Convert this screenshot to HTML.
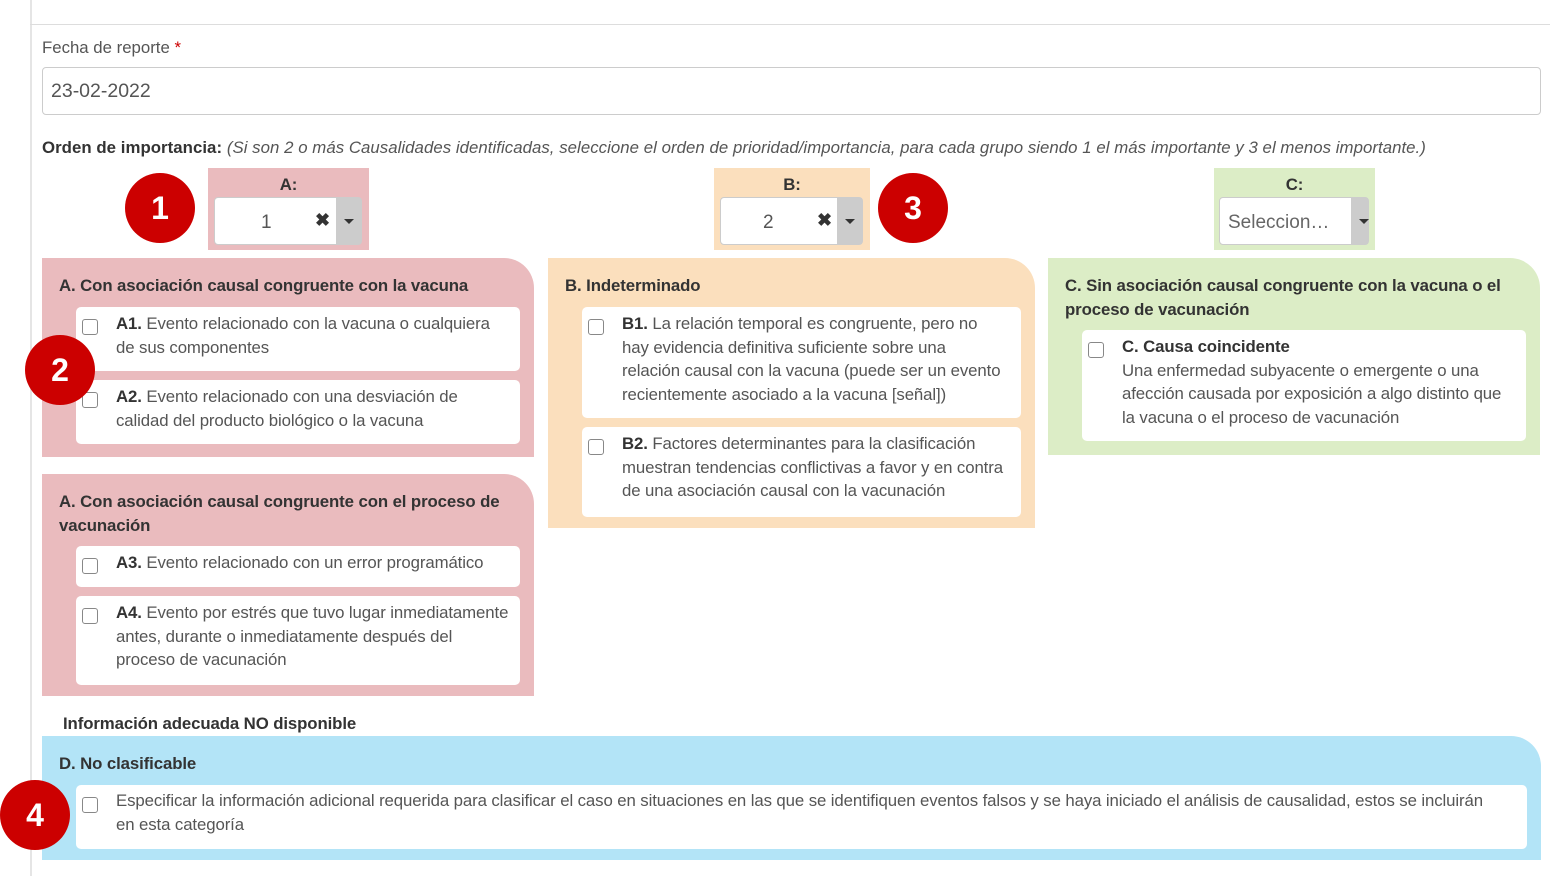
<!DOCTYPE html><html><head><meta charset="utf-8"><style>
*{box-sizing:border-box;margin:0;padding:0}
body{width:1550px;height:880px;position:relative;background:#fff;font-family:"Liberation Sans",sans-serif;color:#555;font-size:16.8px;overflow:hidden}
.a{position:absolute}
.t{font-weight:bold;color:#333;font-size:16.8px;line-height:24px;letter-spacing:-0.1px}
.card{position:absolute;background:#fff;border-radius:5px;line-height:23.5px;font-size:16.8px;padding:5px 14px 0 40px;letter-spacing:-0.1px}
.card b{color:#333}
.cb{position:absolute;left:6px;top:12px;width:16px;height:16px;border:1px solid #888;border-radius:3px;background:#fff}
.circ{position:absolute;width:70px;height:70px;border-radius:50%;background:#c00;color:#fff;font-weight:bold;font-size:32px;text-align:center;line-height:70px}
.sel{position:absolute;background:#fff;border:1px solid #ccc;border-radius:4px;height:48px}
.arr{position:absolute;right:0;top:0;width:25px;height:46px;background:#ccc}
.arr:after{content:"";position:absolute;left:8px;top:21px;border:5px solid transparent;border-top:5px solid #333;border-bottom:0}
</style></head><body>
<div class="a" style="left:30px;top:0;width:2px;height:876px;background:#e5e5e5"></div>
<div class="a" style="left:30px;top:24px;width:1520px;height:1px;background:#ddd"></div>
<div class="a" style="left:42px;top:38px;color:#555">Fecha de reporte <span style="color:#c00">*</span></div>
<div class="a" style="left:42px;top:67px;width:1499px;height:48px;border:1px solid #ccc;border-radius:4px;padding:12px 8px;font-size:19.5px;color:#555;line-height:22px">23-02-2022</div>
<div class="a" style="left:42px;top:138px;color:#555;white-space:nowrap;letter-spacing:0.05px"><b style="color:#333">Orden de importancia:</b> <i>(Si son 2 o más Causalidades identificadas, seleccione el orden de prioridad/importancia, para cada grupo siendo 1 el más importante y 3 el menos importante.)</i></div>

<div class="a" style="left:208px;top:168px;width:161px;height:82px;background:#eabbbe"></div>
<div class="a t" style="left:208px;top:173px;width:161px;text-align:center">A:</div>
<div class="sel" style="left:214px;top:197px;width:148px"><span class="a" style="left:46px;top:14px;font-size:19px">1</span><span class="a" style="left:100px;top:12px;font-size:18px;font-weight:bold;color:#333">✖</span><div class="arr"></div></div>

<div class="a" style="left:714px;top:168px;width:156px;height:82px;background:#fbdfbd"></div>
<div class="a t" style="left:714px;top:173px;width:156px;text-align:center">B:</div>
<div class="sel" style="left:720px;top:197px;width:143px"><span class="a" style="left:42px;top:14px;font-size:19px">2</span><span class="a" style="left:96px;top:12px;font-size:18px;font-weight:bold;color:#333">✖</span><div class="arr"></div></div>

<div class="a" style="left:1214px;top:168px;width:161px;height:82px;background:#dcedc6"></div>
<div class="a t" style="left:1214px;top:173px;width:161px;text-align:center">C:</div>
<div class="sel" style="left:1219px;top:197px;width:150px"><span class="a" style="left:8px;top:14px;font-size:19px;color:#666">Seleccion…</span><div class="arr" style="width:17px"></div></div>

<div class="circ" style="left:125px;top:173px">1</div>
<div class="circ" style="left:878px;top:173px">3</div>

<div class="a" style="left:42px;top:258px;width:492px;height:199px;background:#eabbbe;border-top-right-radius:30px"></div>
<div class="a t" style="left:59px;top:274px">A. Con asociación causal congruente con la vacuna</div>
<div class="card" style="left:76px;top:307px;width:444px;height:64px"><div class="cb"></div><b>A1.</b> Evento relacionado con la vacuna o cualquiera de sus componentes</div>
<div class="card" style="left:76px;top:380px;width:444px;height:64px"><div class="cb"></div><b>A2.</b> Evento relacionado con una desviación de calidad del producto biológico o la vacuna</div>
<div class="circ" style="left:25px;top:335px">2</div>

<div class="a" style="left:42px;top:474px;width:492px;height:222px;background:#eabbbe;border-top-right-radius:30px"></div>
<div class="a t" style="left:59px;top:490px;width:460px">A. Con asociación causal congruente con el proceso de vacunación</div>
<div class="card" style="left:76px;top:546px;width:444px;height:41px"><div class="cb"></div><b>A3.</b> Evento relacionado con un error programático</div>
<div class="card" style="left:76px;top:596px;width:444px;height:89px;padding-right:2px"><div class="cb"></div><b>A4.</b> Evento por estrés que tuvo lugar inmediatamente antes, durante o inmediatamente después del<br>proceso de vacunación</div>

<div class="a" style="left:548px;top:258px;width:487px;height:270px;background:#fbdfbd;border-top-right-radius:30px"></div>
<div class="a t" style="left:565px;top:274px">B. Indeterminado</div>
<div class="card" style="left:582px;top:307px;width:439px;height:111px"><div class="cb"></div><b>B1.</b> La relación temporal es congruente, pero no hay evidencia definitiva suficiente sobre una relación causal con la vacuna (puede ser un evento recientemente asociado a la vacuna [señal])</div>
<div class="card" style="left:582px;top:427px;width:439px;height:90px;padding-right:8px"><div class="cb"></div><b>B2.</b> Factores determinantes para la clasificación muestran tendencias conflictivas a favor y en contra de una asociación causal con la vacunación</div>

<div class="a" style="left:1048px;top:258px;width:492px;height:197px;background:#dcedc6;border-top-right-radius:30px"></div>
<div class="a t" style="left:1065px;top:274px;width:460px">C. Sin asociación causal congruente con la vacuna o el proceso de vacunación</div>
<div class="card" style="left:1082px;top:330px;width:444px;height:111px"><div class="cb"></div><b>C. Causa coincidente</b><br>Una enfermedad subyacente o emergente o una afección causada por exposición a algo distinto que la vacuna o el proceso de vacunación</div>

<div class="a t" style="left:63px;top:712px">Información adecuada NO disponible</div>
<div class="a" style="left:42px;top:736px;width:1499px;height:124px;background:#b3e4f7;border-top-right-radius:30px"></div>
<div class="a t" style="left:59px;top:752px">D. No clasificable</div>
<div class="card" style="left:76px;top:785px;width:1451px;height:64px;padding-top:4px;padding-right:24px"><div class="cb"></div>Especificar la información adicional requerida para clasificar el caso en situaciones en las que se identifiquen eventos falsos y se haya iniciado el análisis de causalidad, estos se incluirán en esta categoría</div>
<div class="circ" style="left:0;top:780px">4</div>
</body></html>
